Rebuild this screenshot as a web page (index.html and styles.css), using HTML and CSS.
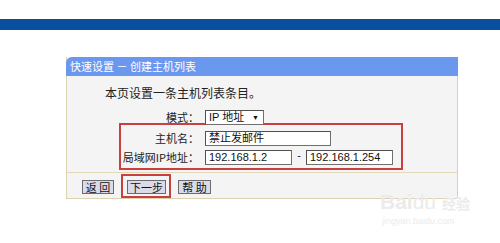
FILE: index.html
```html
<!DOCTYPE html>
<html lang="zh">
<head>
<meta charset="utf-8">
<link rel="stylesheet" href="styles.css">
</head>
<body>
<div class="band"></div>
<div class="panel">
  <div class="panel-head">快速设置 － 创建主机列表</div>
  <div class="panel-body">
    <p class="intro">本页设置一条主机列表条目。</p>
    <div class="rows">
      <div class="row row-plain">
        <span class="label">模式：</span>
        <span class="select">IP 地址<span class="arrow">▼</span></span>
      </div>
      <div class="redbox">
        <div class="row">
          <span class="label">主机名：</span>
          <span class="input w-name">禁止发邮件</span>
        </div>
        <div class="row">
          <span class="label">局域网IP地址：</span>
          <span class="input w-ip">192.168.1.2</span>
          <span class="dash">-</span>
          <span class="input w-ip">192.168.1.254</span>
        </div>
      </div>
    </div>
  </div>
  <div class="panel-foot">
    <span class="btn w-back">返 回</span>
    <span class="btn-hl"><span class="btn w-next">下一步</span></span>
    <span class="btn w-help">帮 助</span>
  </div>
</div>
<div class="watermark">
  <div class="wm-logo">Bai<span class="wm-du">du</span> <span class="wm-jy">经验</span></div>
  <div class="wm-url">jingyan.baidu.com</div>
</div>
</body>
</html>
```
FILE: styles.css
```css
html, body {
  margin: 0;
  padding: 0;
  background: #ffffff;
  font-family: "Liberation Sans", "Noto Sans CJK SC", sans-serif;
  color: #222;
  width: 500px;
  height: 243px;
  overflow: hidden;
  position: relative;
}
.band {
  margin-top: 19px;
  height: 11px;
  background: #0a4f9e;
}
.panel {
  margin: 27px 0 0 66px;
  width: 392px;
  background: #f4f4f4;
  border-left: 1px solid #ddd2b0;
  border-right: 1px solid #ddd2b0;
  border-bottom: 1px solid #ddd2b0;
  box-sizing: border-box;
}
.panel-head {
  height: 19px;
  background: #6a98ef;
  border-top-left-radius: 6px;
  color: #ffffff;
  font-size: 11px;
  line-height: 19px;
  padding-left: 4px;
  font-family: "Noto Sans CJK SC", sans-serif;
  margin-left: -1px;
  margin-right: -1px;
}
.panel-body {
  padding: 8px 0 2px 0;
  border-bottom: 1px solid #e3d8b8;
}
.intro {
  margin: 0 0 8px 38px;
  font-size: 12px;
  line-height: 17px;
  font-family: "Noto Sans CJK SC", sans-serif;
}
.rows {
  margin-left: 52px;
}
.row {
  display: flex;
  align-items: center;
  height: 15px;
}
.row + .row {
  margin-top: 4px;
}
.row-plain {
  padding-left: 2px;
  height: 16px;
}
.label {
  width: 78px;
  flex: none;
  white-space: nowrap;
  text-align: right;
  margin-right: 6px;
  font-size: 11px;
  line-height: 15px;
  font-family: "Noto Sans CJK SC", sans-serif;
}
.select, .input {
  box-sizing: border-box;
  flex: none;
  height: 15px;
  background: #ffffff;
  border: 1px solid #707070;
  border-top-color: #505050;
  border-left-color: #505050;
  font-size: 11px;
  line-height: 13px;
  padding-left: 3px;
  font-family: "Liberation Sans", "Noto Sans CJK SC", sans-serif;
  color: #111;
  white-space: nowrap;
}
.select {
  width: 59px;
  display: flex;
  justify-content: space-between;
  padding-right: 4px;
}
.arrow {
  font-size: 7px;
}
.w-name { width: 126px; }
.w-ip { width: 87px; }
.dash {
  width: 14px;
  text-align: center;
  font-size: 11px;
  line-height: 10px;
  align-self: flex-start;
}
.redbox {
  margin-top: -2px;
  width: 284px;
  box-sizing: border-box;
  border: 2px solid #c8403f;
  padding: 6px 0 3px 0;
}
.panel-foot {
  display: flex;
  align-items: center;
  height: 25px;
  padding-left: 15px;
}
.btn {
  box-sizing: border-box;
  height: 14px;
  background: #d9dce8;
  border: 1px solid #6a6a70;
  font-size: 11px;
  line-height: 12px;
  text-align: center;
  font-family: "Noto Sans CJK SC", sans-serif;
  color: #111;
  margin-top: 3px;
  white-space: nowrap;
}
.w-back { width: 32px; }
.w-next { width: 39px; margin-top: 0; }
.w-help { width: 33px; margin-left: 7px; }
.btn-hl {
  margin-left: 7px;
  box-sizing: border-box;
  width: 50px;
  height: 24px;
  border: 2px solid #c8403f;
  display: flex;
  align-items: center;
  padding: 3px 0 0 4px;
}
.watermark {
  position: absolute;
  left: 380px;
  top: 190px;
  color: #ebebeb;
  font-family: "Liberation Sans", sans-serif;
}
.wm-logo {
  font-size: 21px;
  font-weight: bold;
  line-height: 24px;
}
.wm-du { font-weight: normal; }
.wm-jy {
  font-size: 14px;
  font-family: "Noto Sans CJK SC", sans-serif;
}
.wm-url {
  font-size: 9px;
  line-height: 12px;
  margin-left: 2px;
}
```
